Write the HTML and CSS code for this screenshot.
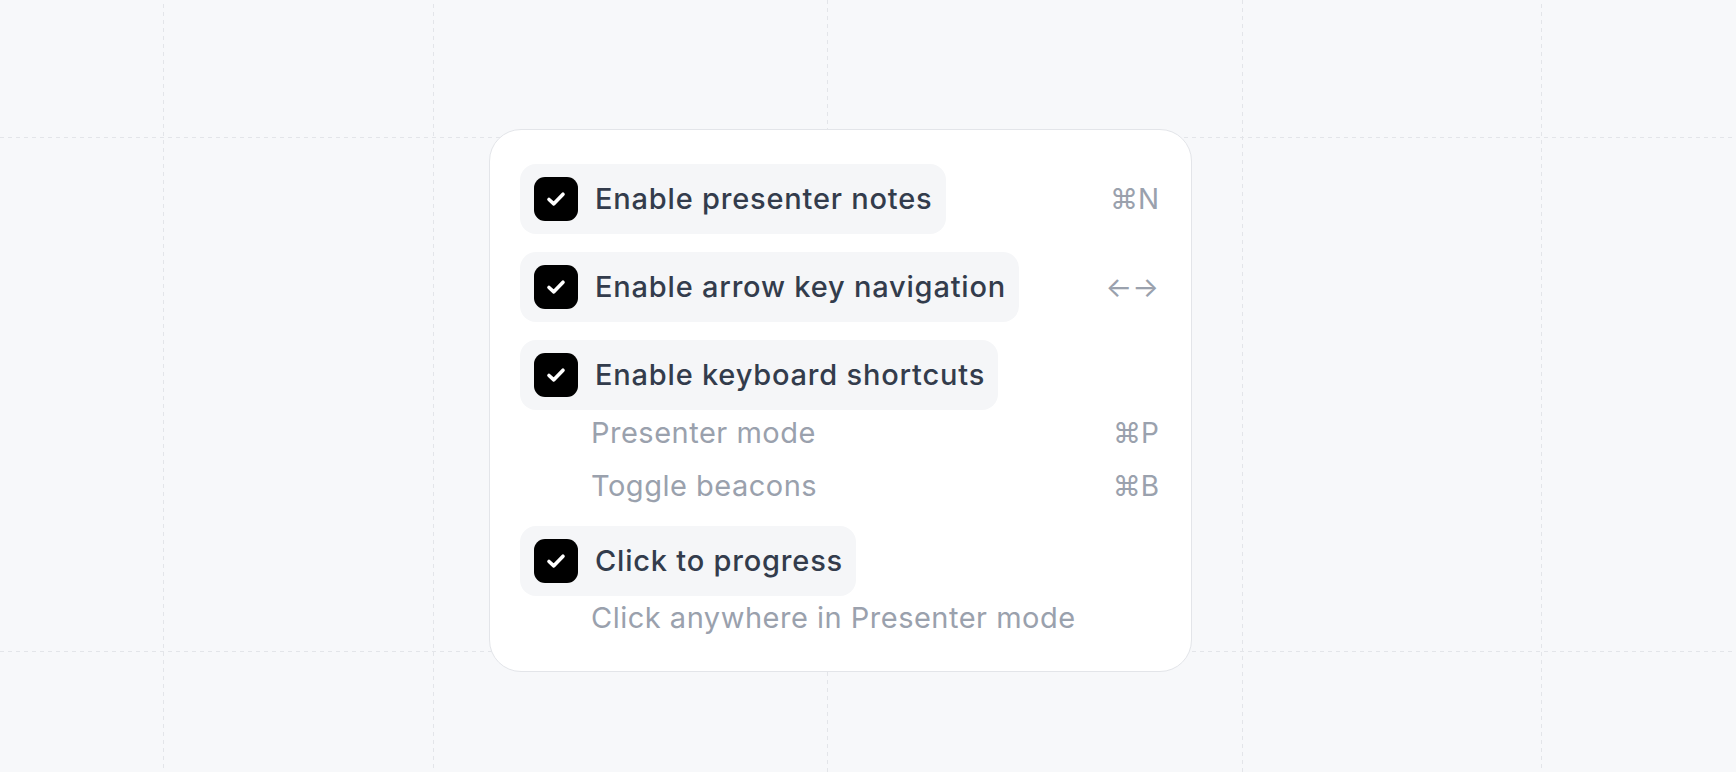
FILE: index.html
```html
<!DOCTYPE html>
<html lang="en">
<head>
<meta charset="utf-8">
<title>Presenter settings</title>
<link rel="stylesheet" href="styles.css">
</head>
<body>
<div class="page">
  <svg class="grid" width="1736" height="772" viewBox="0 0 1736 772" aria-hidden="true">
    <g stroke="#e3e5e9" stroke-width="1" stroke-dasharray="4 4" fill="none">
      <line x1="163.5" y1="4" x2="163.5" y2="772"/>
      <line x1="433.5" y1="4" x2="433.5" y2="772"/>
      <line x1="827.5" y1="0" x2="827.5" y2="772"/>
      <line x1="1242.5" y1="0" x2="1242.5" y2="772"/>
      <line x1="1541.5" y1="4" x2="1541.5" y2="772"/>
      <line x1="0" y1="137.5" x2="1736" y2="137.5"/>
      <line x1="0" y1="651.5" x2="1736" y2="651.5"/>
    </g>
  </svg>
  <div class="card">
    <div class="row">
      <div class="pill">
        <span class="check"><svg width="22" height="18" viewBox="0 0 22 18"><path d="M4 9.5 L8.8 13.8 L18 4.2" stroke="#fff" stroke-width="3.6" fill="none" stroke-linecap="round" stroke-linejoin="round"/></svg></span>
        <span class="label">Enable presenter notes</span>
      </div>
      <span class="key">⌘N</span>
    </div>
    <div class="row gap">
      <div class="pill">
        <span class="check"><svg width="22" height="18" viewBox="0 0 22 18"><path d="M4 9.5 L8.8 13.8 L18 4.2" stroke="#fff" stroke-width="3.6" fill="none" stroke-linecap="round" stroke-linejoin="round"/></svg></span>
        <span class="label">Enable arrow key navigation</span>
      </div>
      <span class="key arrows">←→</span>
    </div>
    <div class="row gap">
      <div class="pill">
        <span class="check"><svg width="22" height="18" viewBox="0 0 22 18"><path d="M4 9.5 L8.8 13.8 L18 4.2" stroke="#fff" stroke-width="3.6" fill="none" stroke-linecap="round" stroke-linejoin="round"/></svg></span>
        <span class="label">Enable keyboard shortcuts</span>
      </div>
    </div>
    <div class="subs">
      <div class="sub"><span class="subtext">Presenter mode</span><span class="key">⌘P</span></div>
      <div class="sub"><span class="subtext">Toggle beacons</span><span class="key">⌘B</span></div>
    </div>
    <div class="row gap-sm">
      <div class="pill">
        <span class="check"><svg width="22" height="18" viewBox="0 0 22 18"><path d="M4 9.5 L8.8 13.8 L18 4.2" stroke="#fff" stroke-width="3.6" fill="none" stroke-linecap="round" stroke-linejoin="round"/></svg></span>
        <span class="label">Click to progress</span>
      </div>
    </div>
    <div class="sub last"><span class="subtext">Click anywhere in Presenter mode</span></div>
  </div>
</div>
</body>
</html>
```

FILE: styles.css
```css
* { box-sizing: border-box; }
html, body { margin: 0; padding: 0; }
body {
  background: #f7f8fa;
  font-family: Inter, "Noto Sans", "DejaVu Sans", sans-serif;
  width: 1736px;
  height: 772px;
  overflow: hidden;
}
.page {
  position: relative;
  width: 1736px;
  height: 772px;
  padding: 129px 0 0 489px;
}
.grid {
  position: absolute;
  left: 0;
  top: 0;
}
.card {
  position: relative;
  width: 703px;
  background: #fff;
  border: 1px solid #e3e5e9;
  border-radius: 32px;
  padding: 34px 32px 31px 30px;
  display: flex;
  flex-direction: column;
}
.row {
  display: flex;
  align-items: center;
  justify-content: space-between;
}
.row.gap { margin-top: 18px; }
.row.gap-sm { margin-top: 17px; }
.pill {
  display: inline-flex;
  align-items: center;
  gap: 17px;
  padding: 13px 13px 13px 14px;
  background: #f5f6f8;
  border-radius: 16px;
}
.check {
  width: 44px;
  height: 44px;
  background: #000;
  border-radius: 11px;
  display: flex;
  align-items: center;
  justify-content: center;
}
.check svg { display: block; }
.label {
  font-size: 29px;
  font-weight: 500;
  line-height: 44px;
  color: #333c4c;
  letter-spacing: 0.8px;
}
.key {
  font-size: 28px;
  line-height: 44px;
  color: #9aa1ad;
  font-weight: 400;
  font-family: Inter, "DejaVu Sans", sans-serif;
}
.subs {
  display: flex;
  flex-direction: column;
  gap: 7px;
}
.sub {
  display: flex;
  align-items: center;
  justify-content: space-between;
  padding-left: 71px;
  height: 46px;
}
.sub.last { height: 44px; }
.subtext {
  font-size: 29px;
  line-height: 44px;
  color: #9aa1ad;
  letter-spacing: 0.5px;
}
```
